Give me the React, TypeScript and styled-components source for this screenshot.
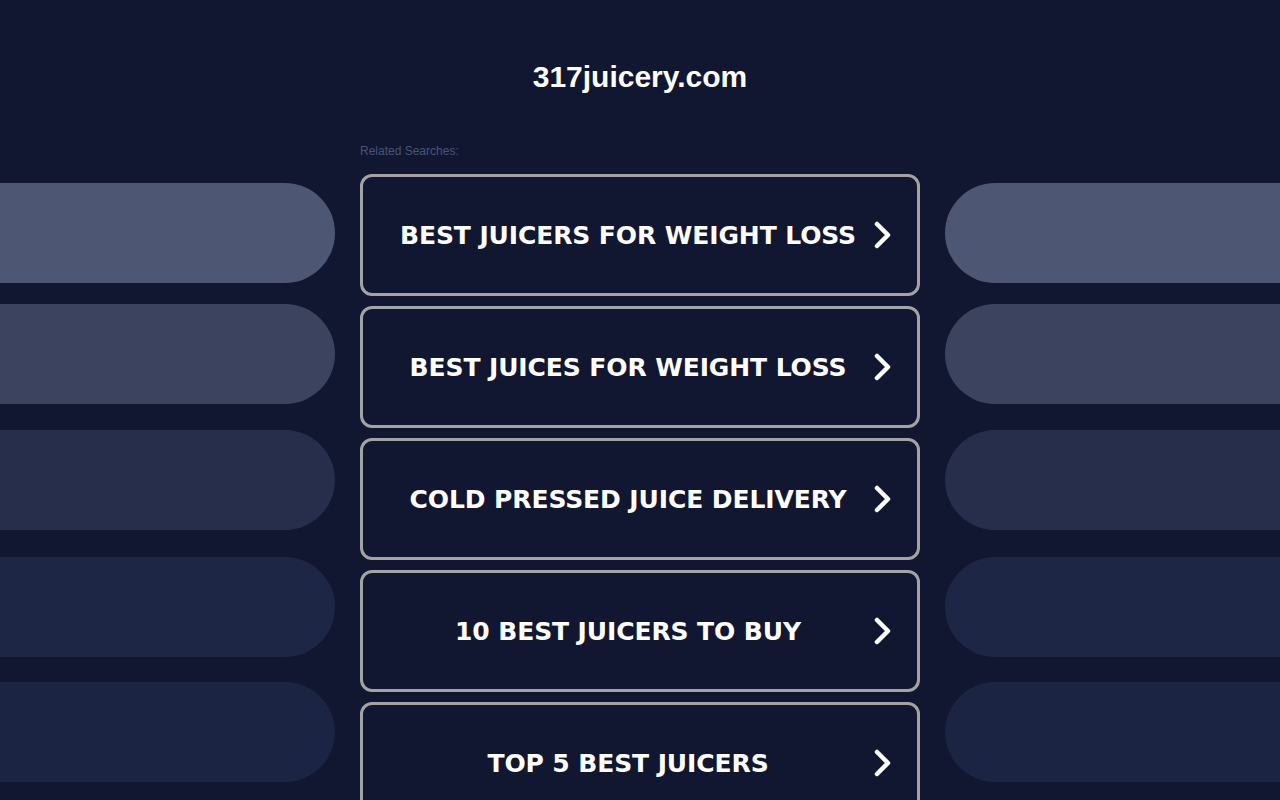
import styled, { createGlobalStyle } from 'styled-components';

const GlobalStyle = createGlobalStyle`
  html, body {
    margin: 0;
    padding: 0;
    background: #111730;
    overflow: hidden;
  }
`;

const Page = styled.div`
  height: 800px;
  font-family: "Liberation Sans", Arial, sans-serif;
  color: #fff;
`;

const Title = styled.h1`
  margin: 0;
  padding-top: 57px;
  height: 40px;
  font-size: 30px;
  font-weight: bold;
  line-height: 40px;
  text-align: center;
`;

const Layout = styled.div`
  display: grid;
  grid-template-columns: 1fr 560px 1fr;
  column-gap: 25px;
  margin-top: 47px;
`;

const Side = styled.div<{ $right?: boolean }>`
  display: flex;
  flex-direction: column;
  padding-top: 39px;
  ${({ $right }) => ($right ? 'margin-right: -60px;' : 'margin-left: -60px;')}
`;

const Pill = styled.div<{ $color: string; $top: number }>`
  height: 100px;
  margin-top: ${({ $top }) => $top}px;
  background: ${({ $color }) => $color};
  border-radius: 50px;
`;

const Center = styled.div`
  display: flex;
  flex-direction: column;
`;

const Label = styled.div`
  font-size: 12px;
  color: #4a5478;
  height: 14px;
  line-height: 14px;
  margin-bottom: 16px;
`;

const List = styled.div`
  display: flex;
  flex-direction: column;
  gap: 10px;
`;

const Item = styled.a`
  display: flex;
  align-items: center;
  height: 116px;
  border: 3px solid #a3a3a3;
  border-radius: 12px;
  padding: 0 26px 0 0;
  text-decoration: none;
  color: #fff;
  cursor: pointer;
`;

const ItemText = styled.span`
  flex: 1;
  text-align: center;
  font-family: "DejaVu Sans", Verdana, sans-serif;
  font-weight: bold;
  font-size: 25px;
  letter-spacing: -0.1px;
  text-transform: uppercase;
`;

const ChevronIcon = styled.svg`
  flex: none;
  margin-left: -22px;
`;

const Chevron = () => (
  <ChevronIcon width="20" height="30" viewBox="0 0 20 30" fill="none">
    <path d="M6 4 L17 15 L6 26" stroke="#fff" strokeWidth="4.5" strokeLinecap="round" strokeLinejoin="round" />
  </ChevronIcon>
);

const pills = [
  { color: '#4d5673', top: 0 },
  { color: '#3b435f', top: 21 },
  { color: '#272e4b', top: 26 },
  { color: '#1e2645', top: 27 },
  { color: '#1c2443', top: 25 },
];

const searches = [
  'Best Juicers for Weight Loss',
  'Best Juices for Weight Loss',
  'Cold Pressed Juice Delivery',
  '10 Best Juicers to Buy',
  'Top 5 Best Juicers',
];

export default function App() {
  return (
    <Page>
      <GlobalStyle />
      <Title>317juicery.com</Title>
      <Layout>
        <Side>
          {pills.map((p, i) => (
            <Pill key={i} $color={p.color} $top={p.top} />
          ))}
        </Side>
        <Center>
          <Label>Related Searches:</Label>
          <List>
            {searches.map((s) => (
              <Item key={s} href="#">
                <ItemText>{s}</ItemText>
                <Chevron />
              </Item>
            ))}
          </List>
        </Center>
        <Side $right>
          {pills.map((p, i) => (
            <Pill key={i} $color={p.color} $top={p.top} />
          ))}
        </Side>
      </Layout>
    </Page>
  );
}
